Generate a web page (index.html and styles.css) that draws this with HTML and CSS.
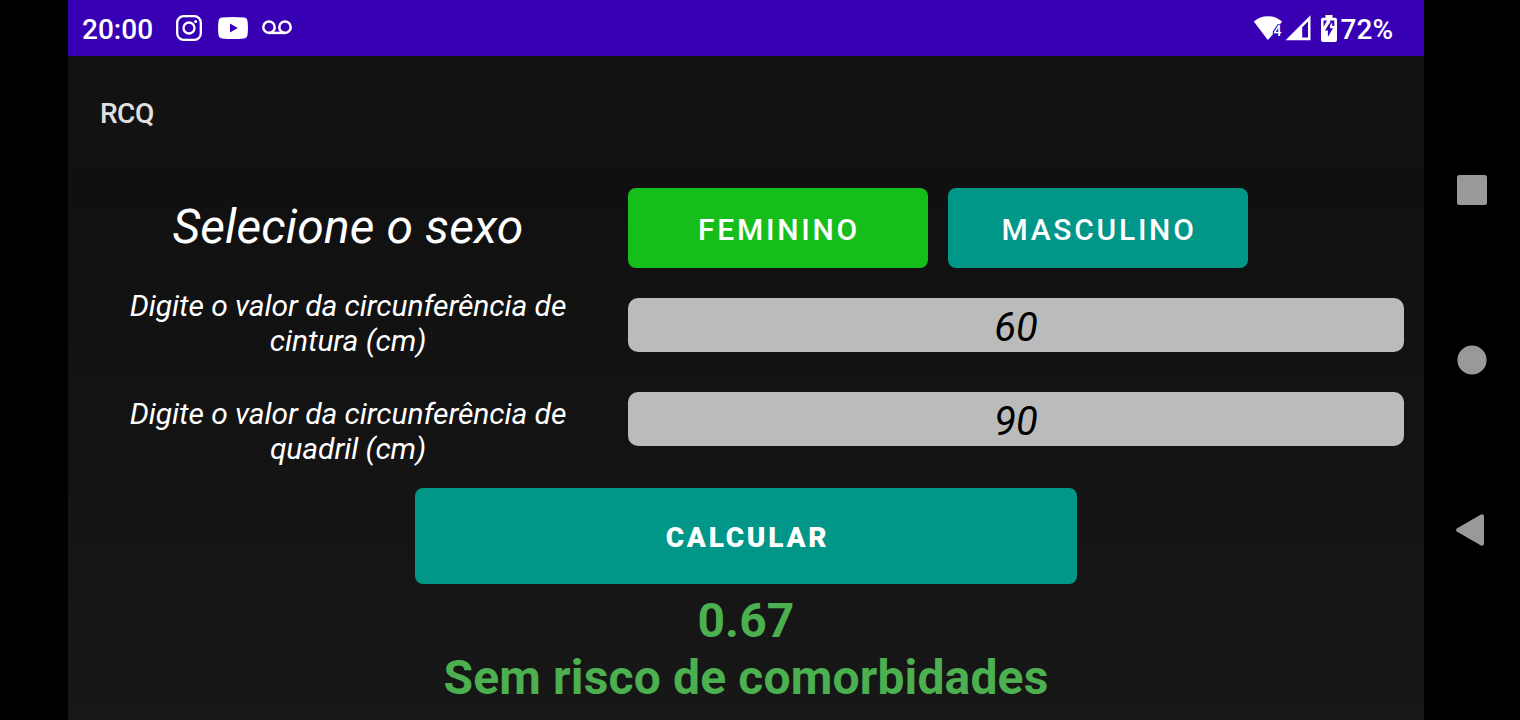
FILE: index.html
```html
<!DOCTYPE html>
<html lang="pt-BR">
<head>
<meta charset="utf-8">
<title>RCQ</title>
<link rel="stylesheet" href="styles.css">
</head>
<body>
<div class="device">
  <div class="app">
    <header class="status-bar">
      <span class="clock">20:00</span>
      <svg class="icon-instagram" width="26" height="26" viewBox="0 0 26 26" fill="none" stroke="#fff" stroke-width="2.3"><rect x="1.2" y="1.2" width="23.6" height="23.6" rx="6.4"/><circle cx="13" cy="13" r="5.5"/><circle cx="19.6" cy="6.4" r="1.5" fill="#fff" stroke="none"/></svg>
      <svg class="icon-youtube" width="30" height="22" viewBox="0 0 30 22"><path fill="#fff" fill-rule="evenodd" d="M4 .6Q15-.4 26 .6 29 .9 29.500 4 30.400 11 29.500 18 29 21.100 26 21.400 15 22.400 4 21.400 1 21.100.5 18-.4 11 .5 4 1 .9 4 .6ZM12 6.500V15.500L19.800 11Z"/></svg>
      <svg class="icon-voicemail" width="30" height="15" viewBox="0 0 30 15" fill="none" stroke="#fff" stroke-width="2.500"><circle cx="7" cy="7.200" r="5.700"/><circle cx="23" cy="7.200" r="5.700"/><path d="M7 12.900H23"/></svg>
      <div class="status-right">
        <svg class="icon-wifi" width="29" height="25" viewBox="0 0 29 25"><path fill="#fff" d="M.8 5.500Q6.800.2 14.800.2T29 5.500L27 8.200H24.500L19.800 15.500V18.600L14.800 24Z"/><text class="wifi-mark" x="20.500" y="19.500">4</text></svg>
        <svg class="icon-signal" width="26" height="26" viewBox="0 0 26 26"><path fill="#fff" fill-rule="evenodd" d="M25.500.2V25.200H.5ZM17.200 12.200V22.600H23V6.400Z"/></svg>
        <svg class="icon-battery" width="16" height="27" viewBox="0 0 16 27"><path fill="#fff" d="M4.500 0H11.500V2.700H14Q16 2.700 16 4.700V25Q16 27 14 27H2Q0 27 0 25V4.700Q0 2.700 2 2.700H4.500Z"/><path fill="#3700b3" d="M2.600 5.400H6L2.600 12ZM9.200 5.400H13.300V11H11.200V7.600L9.200 10.400ZM9 7.500V13.200H12L6.900 22V15.600H3.900Z"/></svg>
        <span class="battery-level">72%</span>
      </div>
    </header>
    <div class="title">RCQ</div>
    <main class="form">
      <div class="row row-sex">
        <div class="label label-large">Selecione o sexo</div>
        <div class="choices">
          <button class="button choice selected">FEMININO</button>
          <button class="button choice">MASCULINO</button>
        </div>
      </div>
      <div class="row row-waist">
        <div class="label">Digite o valor da circunferência de cintura (cm)</div>
        <div class="field">60</div>
      </div>
      <div class="row row-hip">
        <div class="label">Digite o valor da circunferência de quadril (cm)</div>
        <div class="field">90</div>
      </div>
      <button class="button calculate">CALCULAR</button>
      <div class="result">0.67</div>
      <div class="result">Sem risco de comorbidades</div>
    </main>
  </div>
  <nav class="nav-bar">
    <svg width="32" height="32" viewBox="0 0 32 32"><rect x="1" y="1" width="30" height="30" rx="2.500" fill="#999"/></svg>
    <svg width="32" height="32" viewBox="0 0 32 32"><circle cx="16" cy="16" r="14.600" fill="#999"/></svg>
    <svg width="32" height="32" viewBox="0 0 32 32"><path fill="#999" stroke="#999" stroke-width="4" stroke-linejoin="round" d="M2.200 16 26 2.300V29.700Z"/></svg>
  </nav>
</div>
</body>
</html>
```

FILE: styles.css
```css
* { box-sizing: border-box; }
body { margin: 0; background: #000; font-family: Roboto, sans-serif; }
.device { display: grid; grid-template-columns: 1356px 96px; padding-left: 68px; width: 1520px; height: 720px; overflow: hidden; background: #000; }
.app { height: 720px; overflow: hidden; background: linear-gradient(#121212 0 168px, #101010 169px, #121212 330px, #171717 720px); }
.nav-bar { display: flex; flex-direction: column; align-items: center; gap: 138px; padding-top: 174px; }
.status-bar { display: flex; align-items: flex-start; height: 56px; padding: 15px 31px 0 14px; background: #3700b3; color: #fff; font-size: 28px; font-weight: 500; line-height: 30px; }
.clock { width: 94px; }
.icon-youtube { margin: 2px 0 0 16px; }
.icon-voicemail { margin: 5px 0 0 14px; }
.status-right { display: flex; margin-left: auto; }
.icon-wifi { margin-top: 1px; }
.wifi-mark { fill: #fff; font-size: 14px; font-weight: 500; }
.icon-signal { margin-left: 3px; }
.icon-battery { margin-left: 10px; }
.battery-level { margin-left: 4px; }
.title { height: 112px; padding: 41px 32px 0; color: #e0e0e0; font-size: 28px; font-weight: 500; line-height: 33px; letter-spacing: -0.5px; }
.form { display: flex; flex-direction: column; align-items: center; padding-top: 20px; }
.row { display: grid; grid-template-columns: 520px 776px; column-gap: 20px; width: 1356px; padding: 0 20px; }
.label { padding: 0 20px; color: #fff; font-size: 30px; font-style: italic; line-height: 35px; letter-spacing: -0.07px; text-align: center; }
.label-large { padding-top: 11px; font-size: 48px; line-height: 56px; letter-spacing: 0.13px; }
.row-sex { height: 100px; }
.row-waist { height: 104px; }
.row-hip { height: 96px; }
.choices { display: flex; gap: 20px; }
.button { border: 0; border-radius: 8px; background: #009688; color: #fff; font-family: inherit; font-size: 30px; font-weight: 500; letter-spacing: 0.0893em; }
.choice { width: 300px; height: 80px; padding: 3px 0 0 2px; letter-spacing: 2.75px; }
.selected { background: #16be1c; }
.field { height: 54px; margin-top: 10px; border-radius: 10px; background: #bbb; color: #000; font-size: 40px; font-style: italic; line-height: 60px; text-align: center; }
.row-hip .label { padding-top: 4px; }
.row-hip .field { margin-top: 0; }
.calculate { width: 662px; height: 96px; padding: 3px 0 0 3px; margin-bottom: 8px; font-size: 28px; font-weight: 900; letter-spacing: 2.75px; }
.result { color: #4caf50; font-size: 48px; font-weight: 700; line-height: 57px; letter-spacing: 0.15px; }
```
